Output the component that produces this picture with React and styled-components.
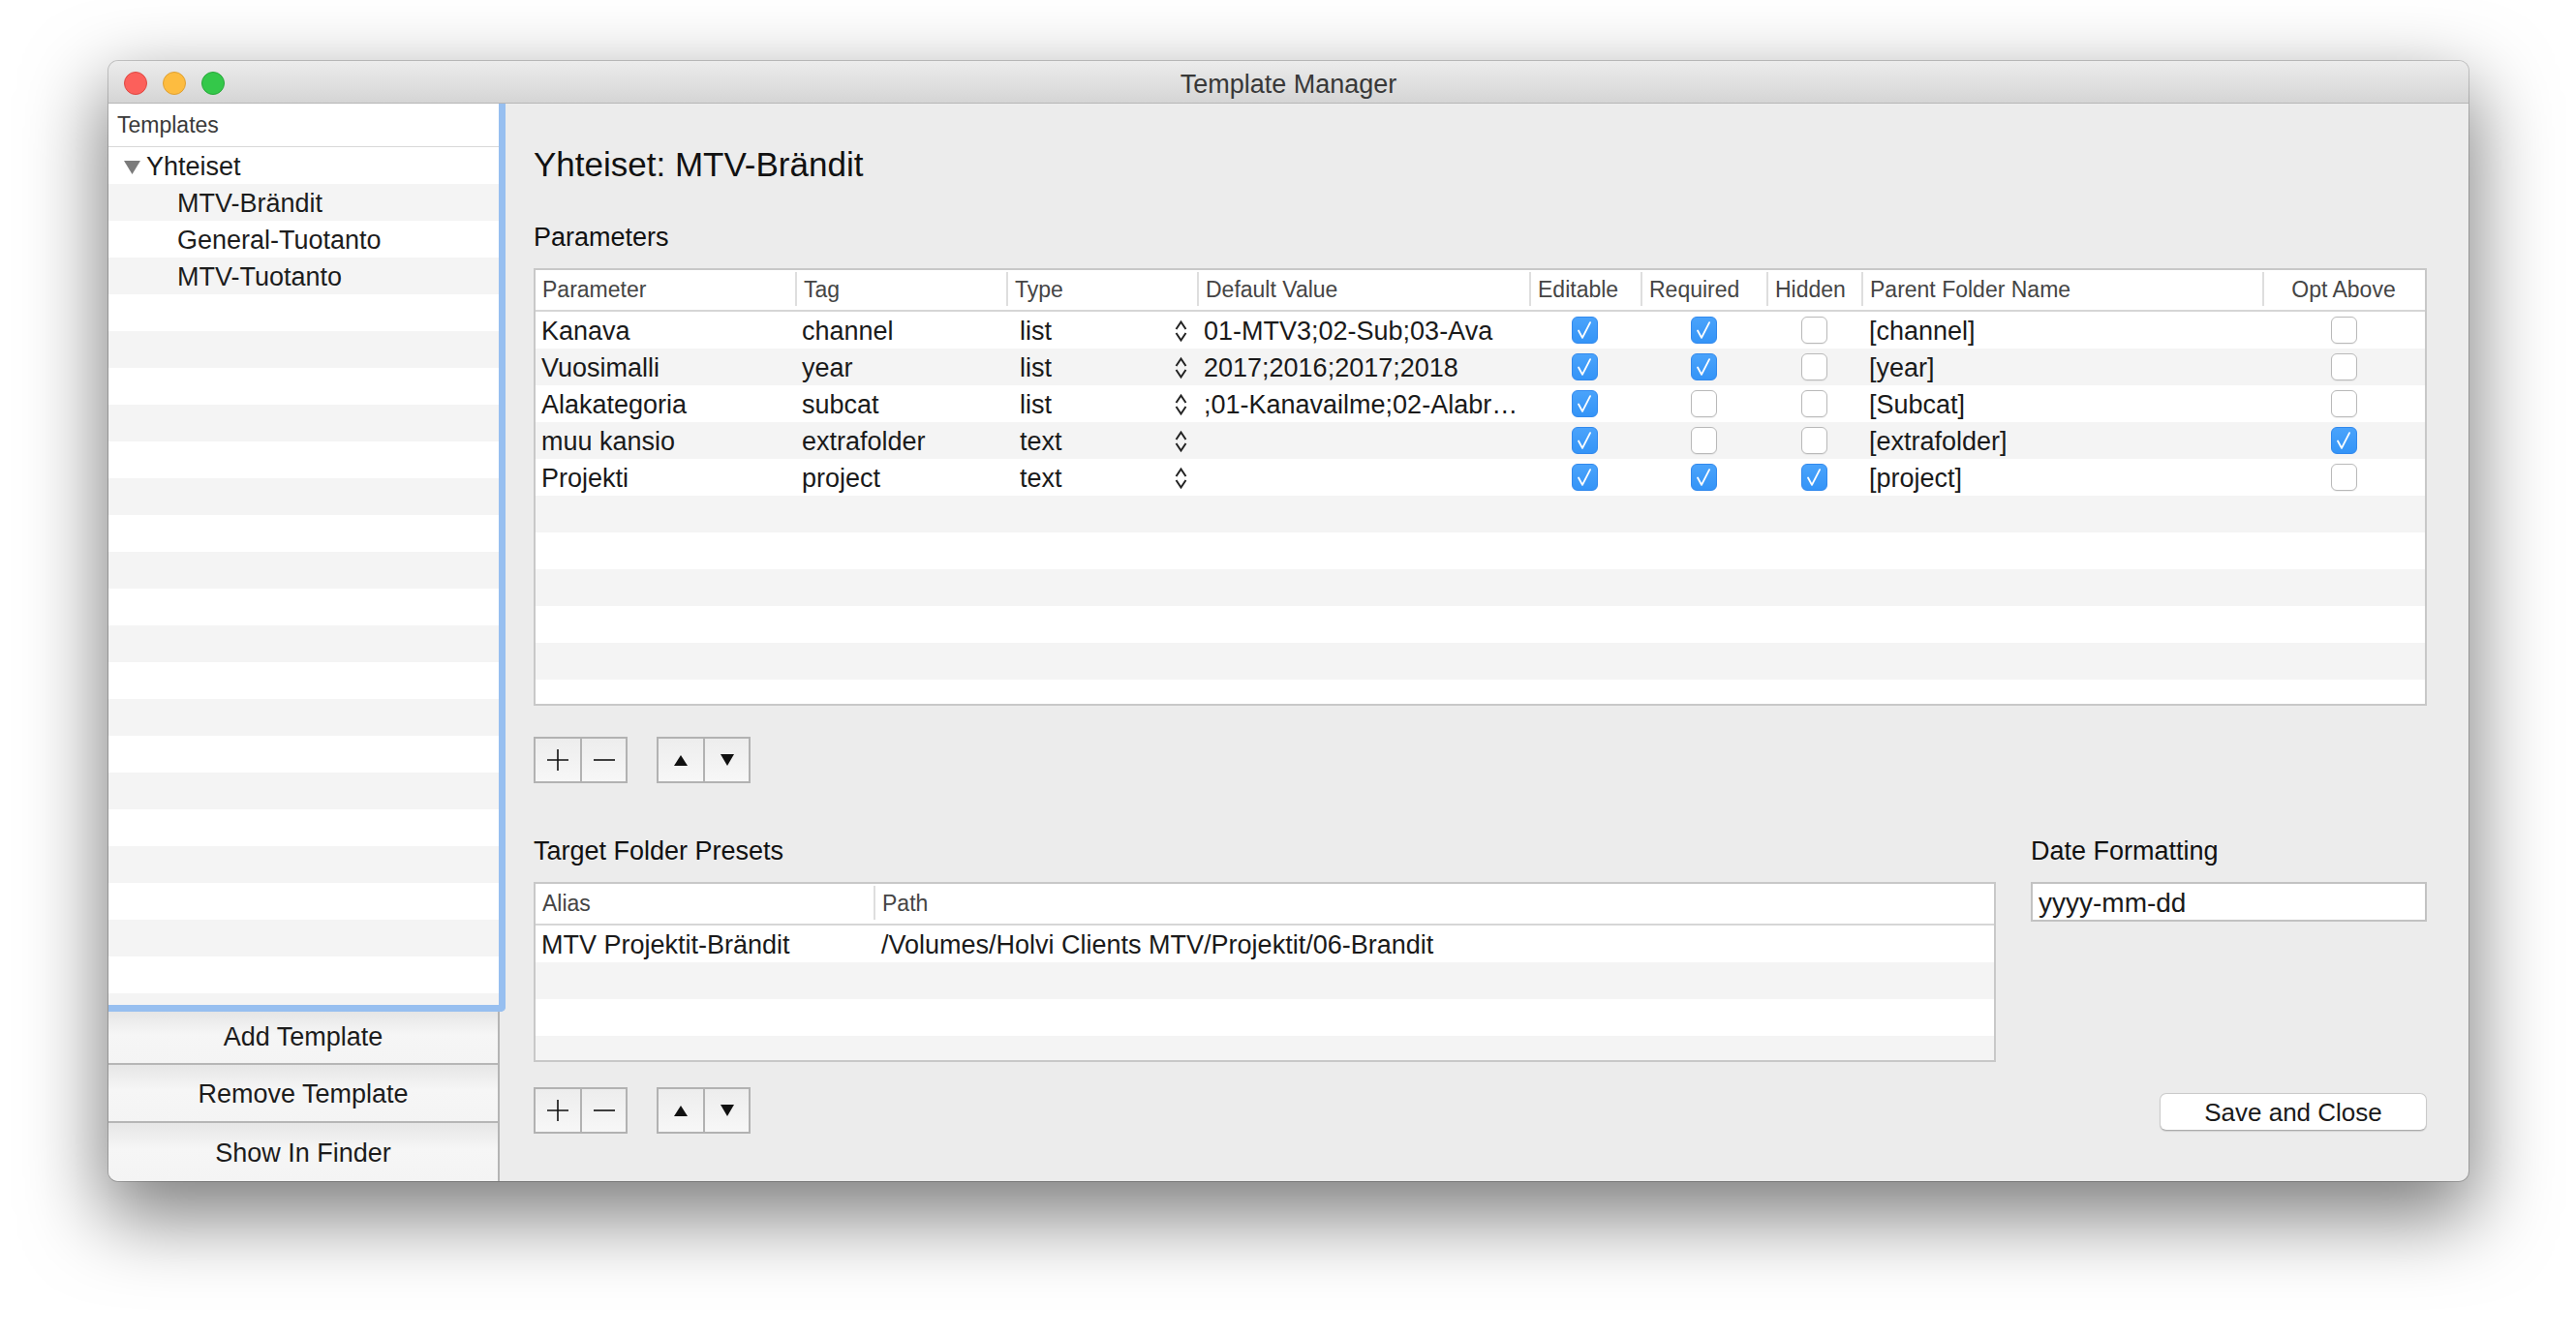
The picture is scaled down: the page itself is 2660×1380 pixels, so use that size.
import React from "react";
import styled, { createGlobalStyle } from "styled-components";

const GlobalStyle = createGlobalStyle`
	html, body {
		margin: 0;
		padding: 0;
		background: #ffffff;
	}
	body {
		font-family: "Liberation Sans", Arial, sans-serif;
		color: #1c1c1c;
	}
`;

const Stage = styled.div`
	width: 2660px;
	height: 1380px;
	box-sizing: border-box;
	padding: 63px 0 0 112px;
	overflow: hidden;
`;

const Window = styled.div`
	width: 2437px;
	height: 1157px;
	display: flex;
	flex-direction: column;
	border-radius: 10px;
	overflow: hidden;
	background: #ececec;
	box-shadow: 0 0 0 1px rgba(0, 0, 0, 0.18), 0 32px 80px 6px rgba(0, 0, 0, 0.5);
`;

const TitleBar = styled.div`
	flex: none;
	height: 44px;
	box-sizing: border-box;
	display: grid;
	grid-template-columns: 1fr auto 1fr;
	align-items: center;
	background: linear-gradient(#ececec, #d5d5d5);
	border-bottom: 1px solid #b6b6b6;
`;

const Lights = styled.div`
	display: flex;
	gap: 16px;
	padding-left: 16px;
`;

const Light = styled.span`
	width: 24px;
	height: 24px;
	box-sizing: border-box;
	border-radius: 50%;
	background: ${(p) => p.$fill};
	border: 1px solid ${(p) => p.$edge};
`;

const WindowTitle = styled.div`
	font-size: 27px;
	line-height: 43px;
	padding-top: 3px;
	color: #383838;
`;

const Body = styled.div`
	flex: 1;
	min-height: 0;
	display: flex;
`;

const Sidebar = styled.aside`
	flex: none;
	width: 410px;
	display: flex;
	flex-direction: column;
`;

const SideList = styled.div`
	flex: 1;
	min-height: 0;
	overflow: hidden;
	background: #fff;
	border-right: 7px solid #97bff0;
	border-bottom: 7px solid #97bff0;
	border-bottom-right-radius: 5px;
`;

const SideHeader = styled.div`
	height: 45px;
	box-sizing: border-box;
	border-bottom: 1px solid #d8d8d8;
	padding-left: 9px;
	font-size: 23px;
	line-height: 44px;
	color: #3a3a3a;
`;

const SideRow = styled.div`
	height: 38px;
	box-sizing: border-box;
	display: flex;
	align-items: center;
	gap: 6px;
	padding: 3px 0 0 ${(p) => p.$indent}px;
	font-size: 27px;
	background: ${(p) => (p.$odd ? "#f4f4f4" : "#ffffff")};
`;

const ButtonStack = styled.div`
	flex: none;
	width: 404px;
	box-sizing: border-box;
	border-right: 2px solid #b4b4b4;
	display: flex;
	flex-direction: column;
`;

const SideButton = styled.div`
	height: ${(p) => p.$h}px;
	box-sizing: border-box;
	border-top: ${(p) => (p.$first ? "0" : "2px solid #b6b6b6")};
	background: linear-gradient(#e6e6e6, #f6f6f6 45%, #f4f4f4);
	display: flex;
	align-items: center;
	justify-content: center;
	padding-top: ${(p) => (p.$first ? 0 : 3)}px;
	font-size: 27px;
	color: #1c1c1c;
`;

const Main = styled.main`
	flex: 1;
	min-width: 0;
	box-sizing: border-box;
	padding: 43px 43px 0 29px;
	display: flex;
	flex-direction: column;
`;

const Heading = styled.h1`
	margin: 0;
	font-size: 35px;
	font-weight: normal;
	line-height: 40px;
	color: #111;
`;

const SectionLabel = styled.div`
	margin: ${(p) => p.$top}px 0 18px;
	padding-top: 1px;
	height: 30px;
	box-sizing: border-box;
	font-size: 27px;
	line-height: 30px;
	color: #111;
`;

const Table = styled.div`
	height: ${(p) => p.$h}px;
	box-sizing: border-box;
	border: 2px solid #c8c8c8;
	background: #fff;
	overflow: hidden;
`;

const HeaderRow = styled.div`
	display: grid;
	grid-template-columns: ${(p) => p.$cols};
	height: 43px;
	box-sizing: border-box;
	border-bottom: 2px solid #d6d6d6;
`;

const HeaderCell = styled.div`
	position: relative;
	padding-left: ${(p) => (p.$center ? 0 : 9)}px;
	text-align: ${(p) => (p.$center ? "center" : "left")};
	font-size: 23px;
	line-height: 41px;
	color: #454545;
	white-space: nowrap;
	overflow: hidden;
	&:first-child {
		padding-left: 7px;
	}
	&:not(:first-child)::before {
		content: "";
		position: absolute;
		left: 0;
		top: 2px;
		bottom: 4px;
		width: 2px;
		background: #dedede;
	}
`;

const DataRow = styled.div`
	display: grid;
	grid-template-columns: ${(p) => p.$cols};
	height: 38px;
	background: ${(p) => (p.$odd ? "#f4f4f4" : "#ffffff")};
`;

const Cell = styled.div`
	box-sizing: border-box;
	padding: 2px 0 0 ${(p) => p.$pad ?? 7}px;
	font-size: 27px;
	line-height: 36px;
	white-space: nowrap;
	overflow: hidden;
	color: #1a1a1a;
`;

const PopupCell = styled.div`
	display: flex;
	align-items: center;
	justify-content: space-between;
	padding: 2px 10px 0 14px;
	font-size: 27px;
	line-height: 36px;
	color: #1a1a1a;
`;

const CheckCell = styled.div`
	display: flex;
	align-items: center;
	justify-content: center;
`;

const Box = styled.span`
	width: 27px;
	height: 28px;
	box-sizing: border-box;
	border-radius: 6px;
	display: flex;
	align-items: center;
	justify-content: center;
	background: ${(p) => (p.$on ? "linear-gradient(#4aa3fb, #3494f7)" : "#ffffff")};
	border: 1.5px solid ${(p) => (p.$on ? "#3189ee" : "#b9b9b9")};
	box-shadow: ${(p) => (p.$on ? "none" : "0 1px 1px rgba(0,0,0,0.06)")};
`;

const ButtonRow = styled.div`
	display: flex;
	gap: 30px;
	margin-top: ${(p) => p.$top}px;
`;

const Segmented = styled.div`
	display: flex;
	border: 2px solid #b2b2b2;
`;

const Segment = styled.div`
	width: 46px;
	height: 44px;
	display: flex;
	align-items: center;
	justify-content: center;
	background: linear-gradient(#ededed, #f7f7f7);
	& + & {
		border-left: 2px solid #b2b2b2;
		width: 45px;
	}
`;

const Lower = styled.div`
	display: flex;
	gap: 36px;
	margin-top: 54px;
`;

const LeftCol = styled.div`
	flex: 1;
	display: flex;
	flex-direction: column;
`;

const RightCol = styled.div`
	flex: none;
	width: 409px;
	display: flex;
	flex-direction: column;
`;

const DateInput = styled.input`
	height: 41px;
	box-sizing: border-box;
	border: 2px solid #c2c2c2;
	background: #fff;
	padding: 2px 0 0 6px;
	font-family: "Liberation Sans", Arial, sans-serif;
	font-size: 28px;
	color: #1a1a1a;
	outline: none;
`;

const PushButton = styled.button`
	margin-top: auto;
	margin-bottom: 3px;
	align-self: flex-end;
	width: 276px;
	height: 39px;
	border-radius: 7px;
	border: 1px solid #cacaca;
	border-bottom-color: #acacac;
	background: #ffffff;
	box-shadow: 0 1px 1px rgba(0, 0, 0, 0.12);
	font-family: "Liberation Sans", Arial, sans-serif;
	font-size: 26px;
	color: #1a1a1a;
	padding: 1px 0 0;
`;

const Stepper = () => (
	<svg width="13" height="24" viewBox="0 0 13 24">
		<polyline points="1.5,10 6.5,2.5 11.5,10" fill="none" stroke="#222" strokeWidth="2" />
		<polyline points="1.5,14 6.5,21.5 11.5,14" fill="none" stroke="#222" strokeWidth="2" />
	</svg>
);

const Disclosure = () => (
	<svg width="17" height="14" viewBox="0 0 17 14">
		<polygon points="0,0 17,0 8.5,14" fill="#7b7b7b" />
	</svg>
);

const Check = () => (
	<svg width="27" height="28" viewBox="0 0 27 28">
		<polyline
			points="6.5,14.5 10.8,22.5 19.5,5.5"
			fill="none"
			stroke="#ffffff"
			strokeWidth="2"
			strokeLinecap="round"
			strokeLinejoin="round"
		/>
	</svg>
);

const Checkbox = ({ on }) => <Box $on={on}>{on && <Check />}</Box>;

const PlusIcon = () => (
	<svg width="24" height="24" viewBox="0 0 24 24">
		<path d="M12 1V23M1 12H23" stroke="#111" strokeWidth="1.6" />
	</svg>
);

const MinusIcon = () => (
	<svg width="24" height="24" viewBox="0 0 24 24">
		<path d="M1 12H23" stroke="#111" strokeWidth="1.6" />
	</svg>
);

const UpIcon = () => (
	<svg width="14" height="11" viewBox="0 0 14 11">
		<polygon points="0,11 7,0 14,11" fill="#111" />
	</svg>
);

const DownIcon = () => (
	<svg width="14" height="12" viewBox="0 0 14 12">
		<polygon points="0,0 14,0 7,12" fill="#111" />
	</svg>
);

const EditControls = () => (
	<>
		<Segmented>
			<Segment>
				<PlusIcon />
			</Segment>
			<Segment>
				<MinusIcon />
			</Segment>
		</Segmented>
		<Segmented>
			<Segment>
				<UpIcon />
			</Segment>
			<Segment>
				<DownIcon />
			</Segment>
		</Segmented>
	</>
);

const PARAM_COLS = "268px 218px 197px 343px 115px 130px 98px 414px 168px";
const PRESET_COLS = "349px 1fr";

const params = [
	{ name: "Kanava", tag: "channel", type: "list", value: "01-MTV3;02-Sub;03-Ava", editable: true, required: true, hidden: false, folder: "[channel]", optAbove: false },
	{ name: "Vuosimalli", tag: "year", type: "list", value: "2017;2016;2017;2018", editable: true, required: true, hidden: false, folder: "[year]", optAbove: false },
	{ name: "Alakategoria", tag: "subcat", type: "list", value: ";01-Kanavailme;02-Alabr…", editable: true, required: false, hidden: false, folder: "[Subcat]", optAbove: false },
	{ name: "muu kansio", tag: "extrafolder", type: "text", value: "", editable: true, required: false, hidden: false, folder: "[extrafolder]", optAbove: true },
	{ name: "Projekti", tag: "project", type: "text", value: "", editable: true, required: true, hidden: true, folder: "[project]", optAbove: false },
];

const presets = [{ alias: "MTV Projektit-Brändit", path: "/Volumes/Holvi Clients MTV/Projektit/06-Brandit" }];

const templates = [
	{ label: "Yhteiset", group: true },
	{ label: "MTV-Brändit" },
	{ label: "General-Tuotanto" },
	{ label: "MTV-Tuotanto" },
];

function App() {
	const sideRows = Array.from({ length: 25 }, (_, i) => templates[i] || null);
	const paramRows = Array.from({ length: 11 }, (_, i) => params[i] || null);
	const presetRows = Array.from({ length: 4 }, (_, i) => presets[i] || null);

	return (
		<>
			<GlobalStyle />
			<Stage>
				<Window>
					<TitleBar>
						<Lights>
							<Light $fill="#fc605b" $edge="#de4842" />
							<Light $fill="#fdbc40" $edge="#dea033" />
							<Light $fill="#34c84a" $edge="#28a83a" />
						</Lights>
						<WindowTitle>Template Manager</WindowTitle>
						<div />
					</TitleBar>
					<Body>
						<Sidebar>
							<SideList>
								<SideHeader>Templates</SideHeader>
								{sideRows.map((t, i) => (
									<SideRow key={i} $odd={i % 2 === 1} $indent={t && !t.group ? 71 : 16}>
										{t && t.group && <Disclosure />}
										{t && t.label}
									</SideRow>
								))}
							</SideList>
							<ButtonStack>
								<SideButton $h={53} $first>
									Add Template
								</SideButton>
								<SideButton $h={60}>Remove Template</SideButton>
								<SideButton $h={62}>Show In Finder</SideButton>
							</ButtonStack>
						</Sidebar>
						<Main>
							<Heading>Yhteiset: MTV-Brändit</Heading>
							<SectionLabel $top={39}>Parameters</SectionLabel>
							<Table $h={452}>
								<HeaderRow $cols={PARAM_COLS}>
									<HeaderCell>Parameter</HeaderCell>
									<HeaderCell>Tag</HeaderCell>
									<HeaderCell>Type</HeaderCell>
									<HeaderCell>Default Value</HeaderCell>
									<HeaderCell>Editable</HeaderCell>
									<HeaderCell>Required</HeaderCell>
									<HeaderCell>Hidden</HeaderCell>
									<HeaderCell>Parent Folder Name</HeaderCell>
									<HeaderCell $center>Opt Above</HeaderCell>
								</HeaderRow>
								{paramRows.map((p, i) =>
									p ? (
										<DataRow key={i} $cols={PARAM_COLS} $odd={i % 2 === 1}>
											<Cell $pad={6}>{p.name}</Cell>
											<Cell>{p.tag}</Cell>
											<PopupCell>
												{p.type}
												<Stepper />
											</PopupCell>
											<Cell>{p.value}</Cell>
											<CheckCell>
												<Checkbox on={p.editable} />
											</CheckCell>
											<CheckCell>
												<Checkbox on={p.required} />
											</CheckCell>
											<CheckCell>
												<Checkbox on={p.hidden} />
											</CheckCell>
											<Cell $pad={8}>{p.folder}</Cell>
											<CheckCell>
												<Checkbox on={p.optAbove} />
											</CheckCell>
										</DataRow>
									) : (
										<DataRow key={i} $cols={PARAM_COLS} $odd={i % 2 === 1} />
									)
								)}
							</Table>
							<ButtonRow $top={32}>
								<EditControls />
							</ButtonRow>
							<Lower>
								<LeftCol>
									<SectionLabel $top={0}>Target Folder Presets</SectionLabel>
									<Table $h={186}>
										<HeaderRow $cols={PRESET_COLS}>
											<HeaderCell>Alias</HeaderCell>
											<HeaderCell>Path</HeaderCell>
										</HeaderRow>
										{presetRows.map((r, i) => (
											<DataRow key={i} $cols={PRESET_COLS} $odd={i % 2 === 1}>
												{r && (
													<>
														<Cell $pad={6}>{r.alias}</Cell>
														<Cell $pad={8}>{r.path}</Cell>
													</>
												)}
											</DataRow>
										))}
									</Table>
									<ButtonRow $top={26}>
										<EditControls />
									</ButtonRow>
								</LeftCol>
								<RightCol>
									<SectionLabel $top={0}>Date Formatting</SectionLabel>
									<DateInput readOnly value="yyyy-mm-dd" />
									<PushButton>Save and Close</PushButton>
								</RightCol>
							</Lower>
						</Main>
					</Body>
				</Window>
			</Stage>
		</>
	);
}

export default App;
